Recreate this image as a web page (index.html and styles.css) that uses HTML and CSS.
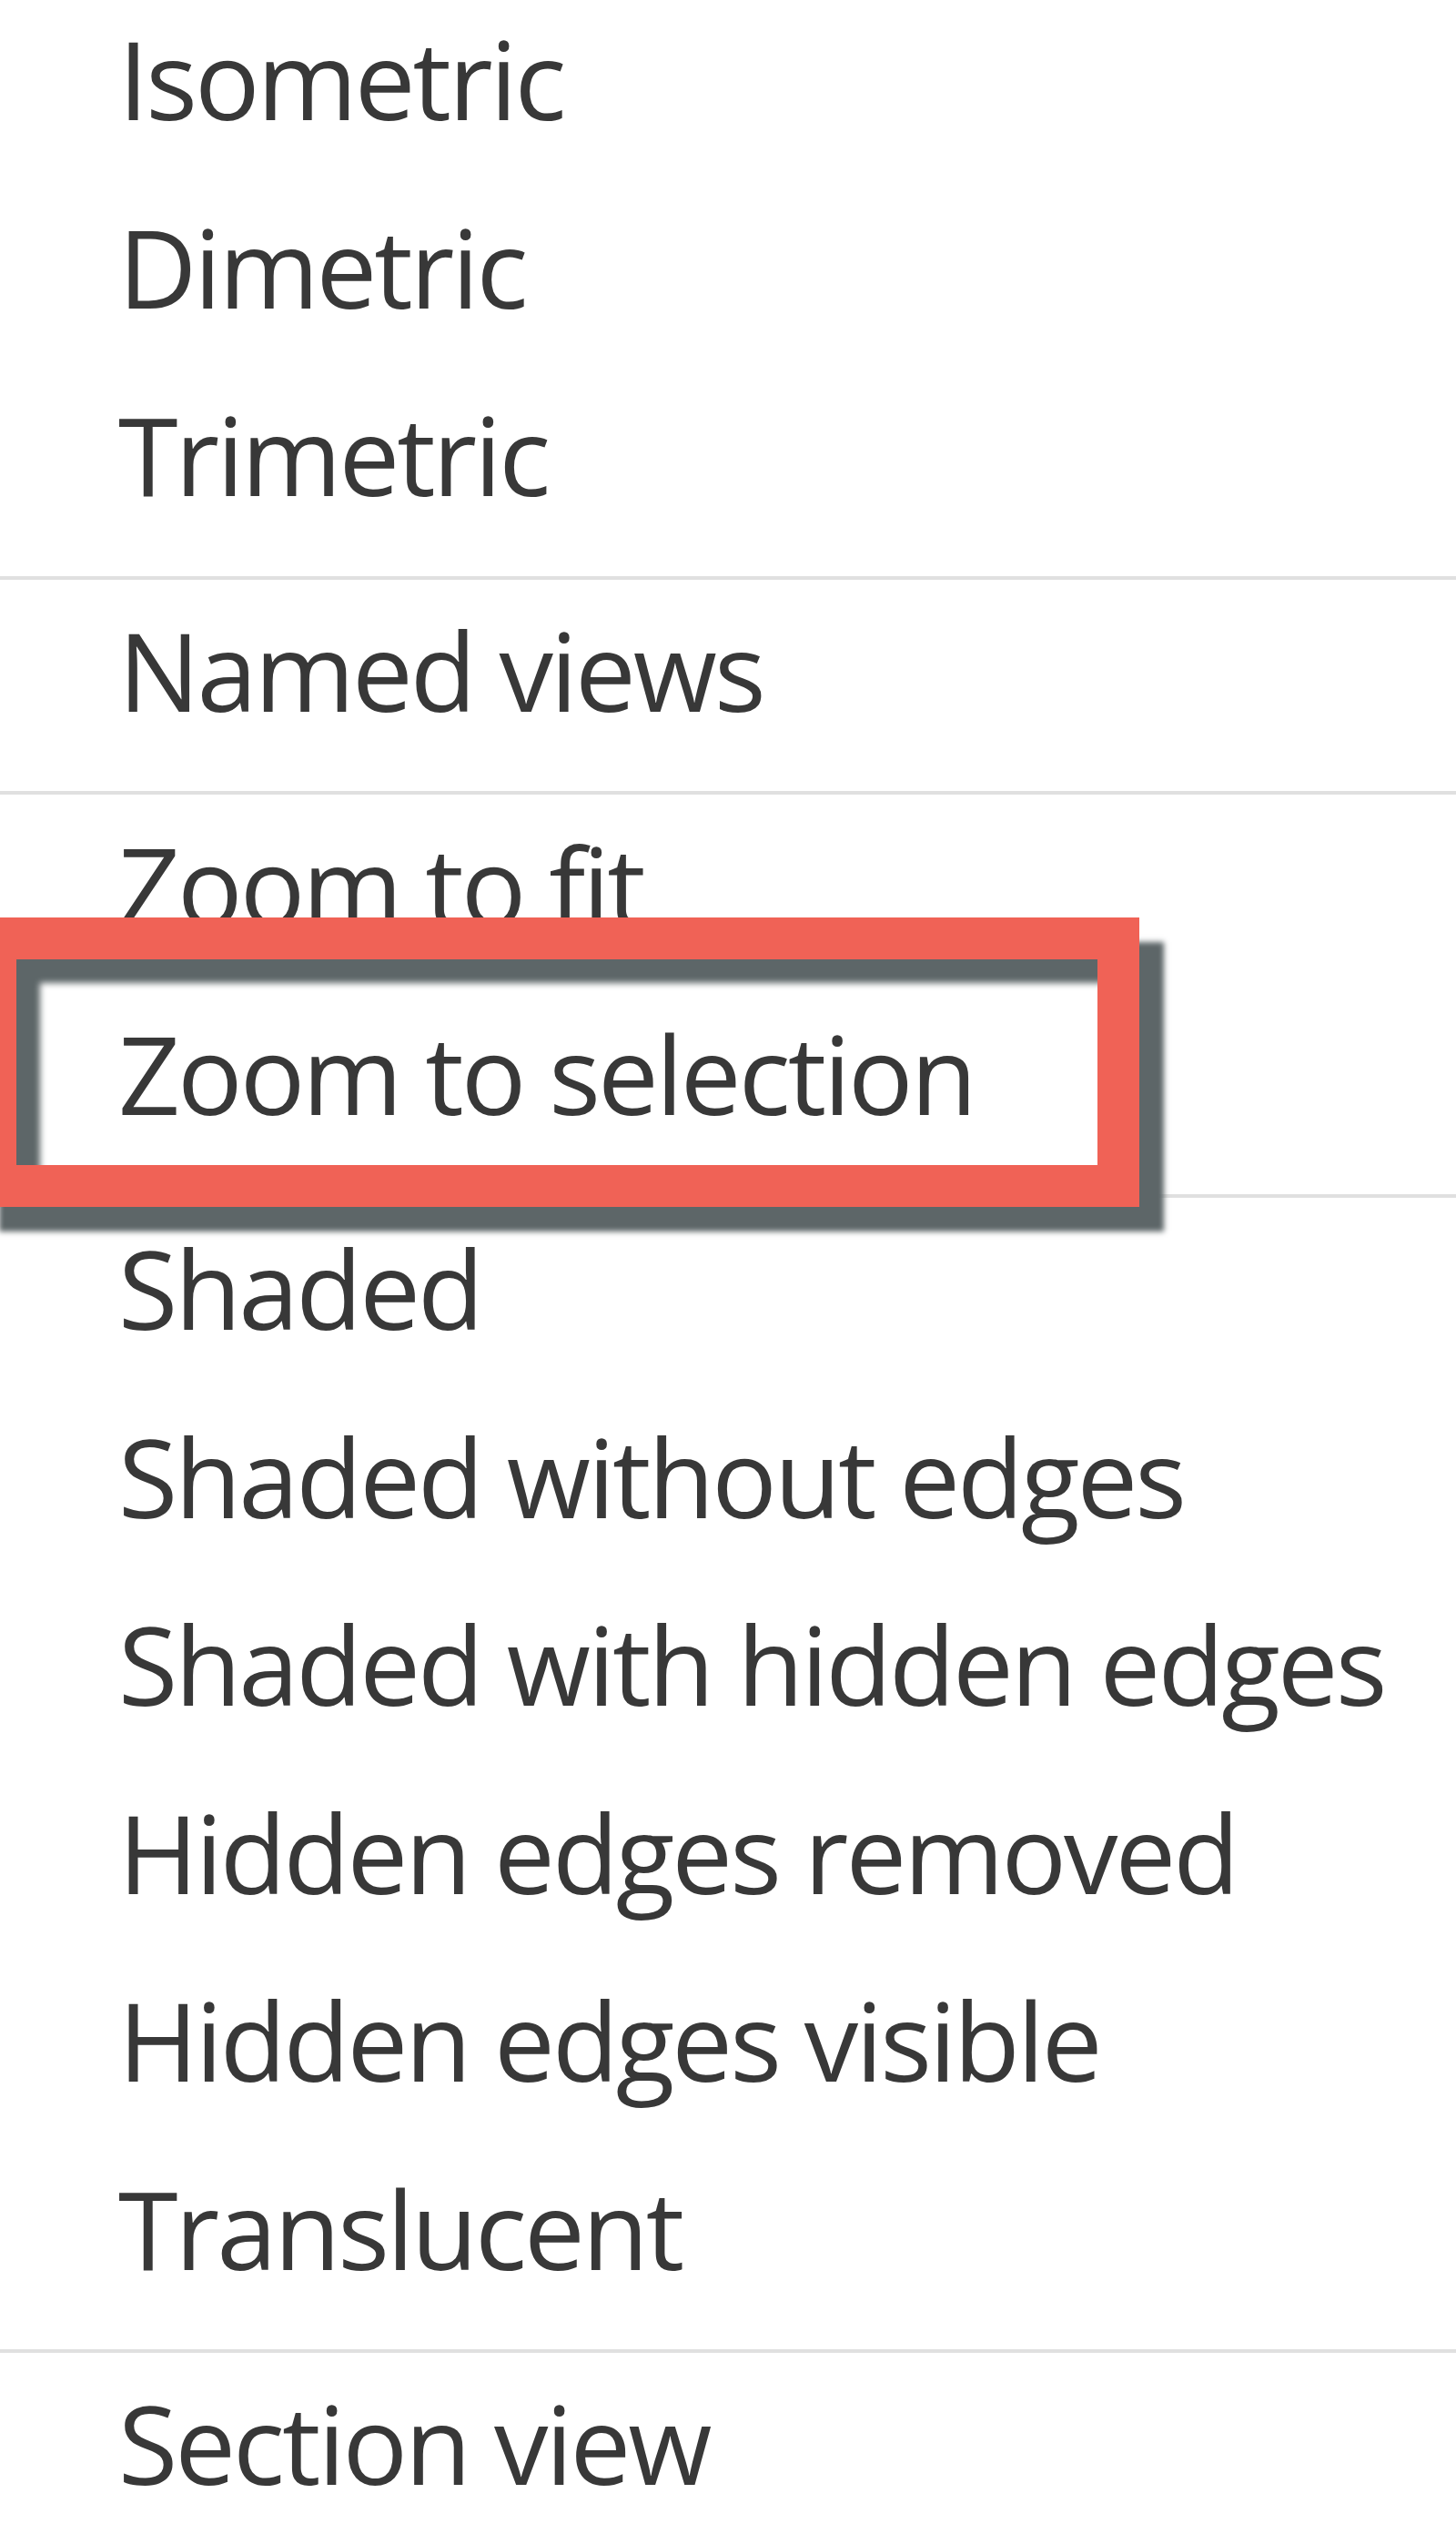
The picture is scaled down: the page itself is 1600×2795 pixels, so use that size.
FILE: index.html
```html
<!DOCTYPE html>
<html lang="en">
<head>
<meta charset="utf-8">
<title>View menu</title>
<link rel="stylesheet" href="styles.css">
</head>
<body>
<ul class="menu">
  <li class="item">Isometric</li>
  <li class="item">Dimetric</li>
  <li class="item">Trimetric</li>
  <li class="sep"></li>
  <li class="item">Named views</li>
  <li class="sep"></li>
  <li class="item">Zoom to fit</li>
  <li class="item current">Zoom to selection<span class="callout"></span></li>
  <li class="sep"></li>
  <li class="item">Shaded</li>
  <li class="item">Shaded without edges</li>
  <li class="item">Shaded with hidden edges</li>
  <li class="item">Hidden edges removed</li>
  <li class="item">Hidden edges visible</li>
  <li class="item">Translucent</li>
  <li class="sep"></li>
  <li class="item">Section view</li>
</ul>
</body>
</html>
```

FILE: styles.css
```css
html, body {
  margin: 0;
  padding: 0;
  background: #ffffff;
}

.menu {
  list-style: none;
  margin: 0;
  padding: 0;
  font-family: "Open Sans", "Noto Sans", sans-serif;
  font-size: 119px;
  letter-spacing: -3px;
  color: #383838;
}

.item {
  box-sizing: border-box;
  height: 206.5px;
  padding: 5px 0 0 130px;
  line-height: 162px;
  white-space: nowrap;
}

.sep {
  height: 4px;
  margin: 13px 0;
  background: #e0e0e0;
}

.current {
  position: relative;
}

.callout {
  position: absolute;
  left: -28px;
  top: -84.5px;
  width: 1280px;
  height: 318px;
  box-sizing: border-box;
  border: 46px solid #f06256;
  box-shadow: 27px 27px 6px #5d6668, inset 26px 26px 7px #5d6668;
}
```
